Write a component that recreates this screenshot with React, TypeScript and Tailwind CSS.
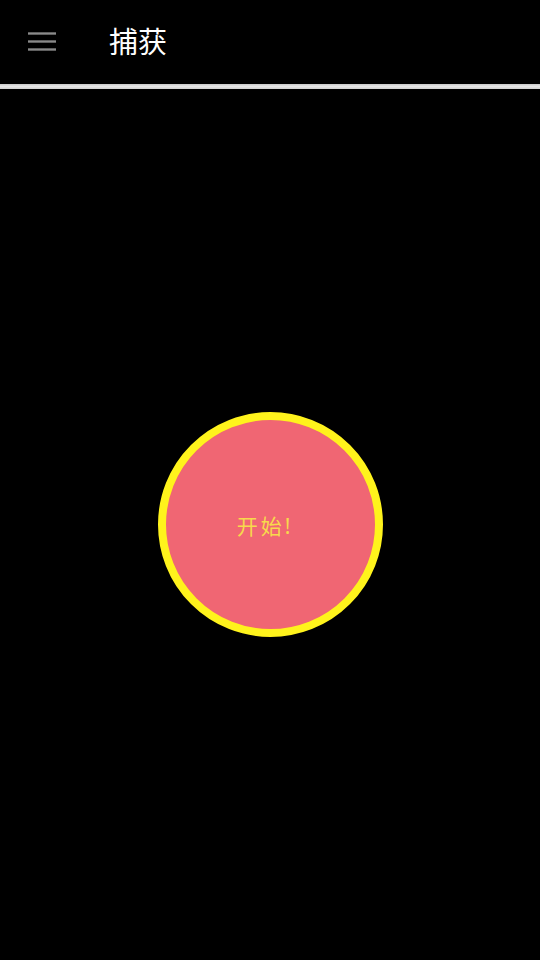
export default function App() {
  return (
    <div className="w-[540px] h-[960px] bg-black flex flex-col font-['Noto_Sans','Noto_Sans_CJK_SC',sans-serif]">
      <div className="h-[84px] flex items-center shrink-0">
        <div className="w-[28px] ml-[28px] flex flex-col gap-[5px] -mt-[2px]">
          <div className="h-[3px] bg-gradient-to-b from-[#4a4a4a] via-[#8a8a8a] to-[#4a4a4a]" />
          <div className="h-[3px] bg-gradient-to-b from-[#4a4a4a] via-[#8a8a8a] to-[#4a4a4a]" />
          <div className="h-[3px] bg-gradient-to-b from-[#4a4a4a] via-[#8a8a8a] to-[#4a4a4a]" />
        </div>
        <span className="ml-[53px] text-white text-[29px] leading-none -mt-[2px]">捕获</span>
      </div>
      <div className="h-[5px] bg-gradient-to-b from-[#c8c8c8] via-[#e6e6e6] to-[#d0d0d0] shrink-0" />
      <div className="flex-1 flex items-center justify-center">
        <button className="w-[225px] h-[225px] rounded-full bg-[#f06673] border-[8px] border-[#fff31c] flex items-center justify-center">
          <span className="text-[#f7d94c] text-[21px] tracking-[3px] leading-none pr-[10px] mt-[3px]">开始!</span>
        </button>
      </div>
    </div>
  );
}
